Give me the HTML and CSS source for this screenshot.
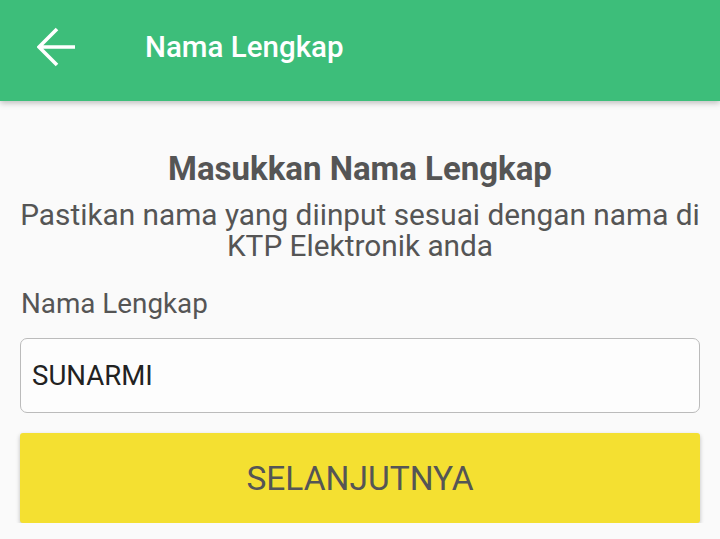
FILE: index.html
```html
<!DOCTYPE html>
<html lang="id">

<head>
    <meta charset="UTF-8">
    <meta name="viewport" content="width=device-width, initial-scale=1.0">
    <title>Nama Lengkap</title>
    <link rel="stylesheet" href="styles.css">
</head>

<body>
    <header class="toolbar">
        <button class="back" aria-label="Kembali">
            <svg width="40" height="40" viewBox="0 0 40 40">
                <path d="M38 20H3M20 2L2 20L20 38" fill="none" stroke="#fff" stroke-width="3.6"/>
            </svg>
        </button>
        <h1 class="toolbar-title">Nama Lengkap</h1>
    </header>

    <main class="content">
        <h2 class="heading">Masukkan Nama Lengkap</h2>
        <p class="hint">Pastikan nama yang diinput sesuai dengan nama di KTP Elektronik anda</p>

        <label class="label" for="nama">Nama Lengkap</label>
        <input class="field" id="nama" type="text" value="SUNARMI">

        <button class="next">SELANJUTNYA</button>
    </main>
</body>

</html>
```

FILE: styles.css
```css
body {
    margin: 0;
    background: #fafafa;
    font-family: Roboto, "Noto Sans", sans-serif;
    color: #555;
}

.toolbar {
    display: flex;
    align-items: center;
    height: 101px;
    background: #3dbe7a;
    box-shadow: 0 2px 6px rgba(0, 0, 0, 0.25);
}

.back {
    display: flex;
    align-items: center;
    justify-content: center;
    width: 40px;
    height: 40px;
    margin: 0 0 8px 37px;
    padding: 0;
    border: none;
    background: none;
}

.toolbar-title {
    margin: 0 0 8px 68px;
    font-size: 29.5px;
    font-weight: 500;
    color: #fff;
}

.content {
    display: flex;
    flex-direction: column;
    padding: 48px 20px 0;
}

.heading {
    margin: 0;
    text-align: center;
    font-size: 33px;
    font-weight: 700;
    line-height: 40px;
}

.hint {
    margin: 10px 0 0;
    text-align: center;
    font-size: 29.8px;
    line-height: 31px;
}

.label {
    margin: 25px 0 0 1px;
    font-size: 27.8px;
    line-height: 36px;
}

.field {
    box-sizing: border-box;
    height: 75px;
    margin-top: 16px;
    padding: 0 11px;
    border: 1.5px solid #bbb;
    border-radius: 7px;
    background: #fdfdfd;
    font-family: inherit;
    font-size: 27.6px;
    color: #222;
}

.next {
    height: 90px;
    margin-top: 20px;
    border: none;
    border-radius: 3px;
    background: #f4e031;
    box-shadow: 0 2px 4px rgba(0, 0, 0, 0.25);
    font-family: inherit;
    font-size: 33.5px;
    color: #555;
}
```
